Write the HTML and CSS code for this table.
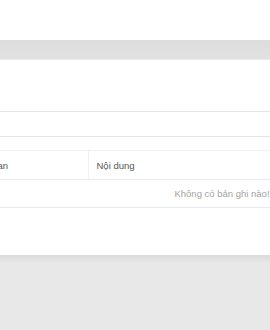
FILE: index.html
```html
<!DOCTYPE html>
<html lang="vi">
<head>
  <meta charset="UTF-8" />
  <meta name="viewport" content="width=device-width, initial-scale=1" />
  <title>Lịch sử</title>
  <link rel="stylesheet" href="styles.css">
</head>
<body>
  <div class="top"></div>
  <div class="bar"></div>

  <div class="panel">
    <div class="toolbar"></div>

    <table class="grid">
      <thead>
        <tr>
          <th class="col-time">Thời gian</th>
          <th class="col-content">Nội dung</th>
        </tr>
      </thead>
      <tbody>
        <tr>
          <td class="empty" colspan="2">Không có bản ghi nào!</td>
        </tr>
      </tbody>
    </table>
  </div>

  <div class="backdrop"></div>
</body>
</html>
```

FILE: styles.css
```css
* {
  margin: 0;
  padding: 0;
  box-sizing: border-box;
}
body {
  font-family: 'Liberation Sans', Arial, sans-serif;
  background: #e8e8e8;
  color: #333;
  overflow: hidden;
}

.top {
  height: 40px;
  background: #fff;
}
.bar {
  height: 20px;
  background: linear-gradient(#dddddd, #e1e1e1);
  border-bottom: 1px solid #ebebeb;
}

.panel {
  background: #fff;
  height: 195px;
  padding-top: 51px;
}
.toolbar {
  height: 26px;
  border-top: 1px solid #e4e4e8;
  border-bottom: 1px solid #e4e4e8;
}

.grid {
  margin-top: 13px;
  margin-left: -40px;
  width: 524px;
  border-collapse: collapse;
  font-size: 9.5px;
}
.grid th {
  font-weight: normal;
  text-align: left;
  height: 29px;
  padding: 0 8px;
  color: #555;
  border-top: 1px solid #f0f0f4;
  border-bottom: 1px solid #e8e8f0;
}
.col-time {
  width: 128px;
  border-right: 1px solid #eeeef2;
}
.grid td {
  height: 28px;
  border-bottom: 1px solid #e8e8f0;
}
.empty {
  color: #a4a4a4;
  text-align: center;
}

.backdrop {
  height: 80px;
  background: linear-gradient(#dadada, #e8e8e8 8px);
}
```
